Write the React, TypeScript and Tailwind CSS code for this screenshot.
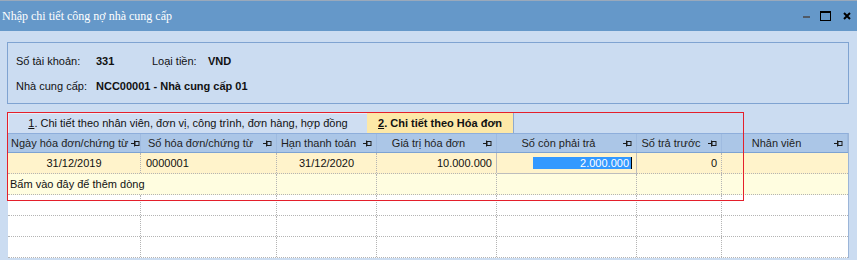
import React from 'react';

const cols = [133, 136, 100, 120, 140, 85, 126];

const headers = [
  { label: 'Ngày hóa đơn/chứng từ', align: 'justify-start pl-[3px]' },
  { label: 'Số hóa đơn/chứng từ', align: 'justify-center' },
  { label: 'Hạn thanh toán', align: 'justify-center' },
  { label: 'Giá trị hóa đơn', align: 'justify-center' },
  { label: 'Số còn phải trả', align: 'justify-center' },
  { label: 'Số trả trước', align: 'justify-center' },
  { label: 'Nhân viên', align: 'justify-center' },
];

function Pin() {
  return (
    <svg width="9" height="7" viewBox="0 0 9 7" className="shrink-0">
      <path d="M0 3.5H3.5M3.5 0.5V6.5" stroke="#1a1a1a" strokeWidth="1" fill="none" />
      <rect x="4" y="1.5" width="4" height="4" stroke="#1a1a1a" strokeWidth="1" fill="none" />
    </svg>
  );
}

function EmptyRow({ bg }: { bg: string }) {
  return (
    <div className={`flex h-[21px] border-b border-dotted border-[#b4b4b4] ${bg}`}>
      {cols.map((w, i) => (
        <div
          key={i}
          style={{ width: w }}
          className={`h-full shrink-0 ${i < cols.length - 1 ? 'border-r border-dotted border-[#b4b4b4]' : ''}`}
        />
      ))}
    </div>
  );
}

export default function App() {
  return (
    <div
      className="relative w-[857px] h-[260px] overflow-hidden bg-[#cbdcf1] text-[11px] text-[#111]"
      style={{ fontFamily: '"Liberation Sans", Arial, sans-serif' }}
    >
      {/* title bar */}
      <div className="flex items-center h-[31px] bg-[#6598c9] border-t border-[#9aa9bb] pl-[2px] pr-[6px]">
        <span
          className="text-white text-[12px] flex-1"
          style={{ fontFamily: '"Liberation Serif", "Times New Roman", serif' }}
        >
          Nhập chi tiết công nợ nhà cung cấp
        </span>
        <div className="flex items-center">
          <div className="w-[7px] h-[2px] bg-[#505a66] mr-[10px] mt-[2px]" />
          <div className="w-[11px] h-[10px] border border-black border-t-[2px] mr-[12px]" />
          <svg width="8" height="8" viewBox="0 0 8 8">
            <path d="M1 1L7 7M7 1L1 7" stroke="#000" strokeWidth="2" />
          </svg>
        </div>
      </div>

      {/* info box */}
      <div className="mt-[11px] ml-[7px] w-[842px] h-[62px] border border-[#7fa3d1] pl-[8px] pt-[11px]">
        <div className="flex items-center h-[14px]">
          <span className="w-[80px]">Số tài khoản:</span>
          <span className="w-[56px] font-bold">331</span>
          <span className="w-[56px]">Loại tiền:</span>
          <span className="font-bold">VND</span>
        </div>
        <div className="flex items-center h-[14px] mt-[11px]">
          <span className="w-[80px]">Nhà cung cấp:</span>
          <span className="font-bold">NCC00001 - Nhà cung cấp 01</span>
        </div>
      </div>

      {/* tabs */}
      <div className="mt-[9px] ml-[8px] flex h-[20px]">
        <div className="w-[359px] h-full flex items-center justify-center bg-[#cfdef2] border-t border-l border-[#e6eef8]">
          <span>
            <span className="underline">1</span>. Chi tiết theo nhân viên, đơn vị, công trình, đơn hàng, hợp đồng
          </span>
        </div>
        <div className="w-[147px] h-full flex items-center justify-center bg-[#fde8a7] border-r border-[#8ea9cf] font-bold">
          <span>
            <span className="underline">2</span>. Chi tiết theo Hóa đơn
          </span>
        </div>
      </div>

      {/* grid */}
      <div className="ml-[8px] w-[841px] border-r border-[#9bb5d8] bg-white">
        <div className="flex h-[20px] bg-[#abc6e7] border-t border-[#8eaedb] border-b border-b-[#7da2d2]">
          {headers.map((h, i) => (
            <div
              key={i}
              style={{ width: cols[i] }}
              className="h-full shrink-0 flex items-center gap-[3px] pr-[4px] border-r border-[#9fbbe0]"
            >
              <div className={`flex-1 flex ${h.align} text-[#1e1e1e] whitespace-nowrap`}>{h.label}</div>
              <Pin />
            </div>
          ))}
        </div>

        {/* row 1 */}
        <div className="flex h-[21px] bg-[#fff3cb] border-b border-dotted border-[#b4b4b4]">
          <div style={{ width: cols[0] }} className="shrink-0 flex items-center justify-center border-r border-dotted border-[#b4b4b4]">
            31/12/2019
          </div>
          <div style={{ width: cols[1] }} className="shrink-0 flex items-center pl-[5px] border-r border-dotted border-[#b4b4b4]">
            0000001
          </div>
          <div style={{ width: cols[2] }} className="shrink-0 flex items-center justify-center border-r border-dotted border-[#b4b4b4]">
            31/12/2020
          </div>
          <div style={{ width: cols[3] }} className="shrink-0 flex items-center justify-end pr-[4px] border-r border-[#bdbdbd]">
            10.000.000
          </div>
          <div style={{ width: cols[4] }} className="shrink-0 flex items-center justify-end pr-[4px] border-r border-b border-[#bdbdbd] h-[21px]">
            <div className="flex items-center h-[12px]">
              <div className="w-[98px] h-full bg-[#3399ff] flex items-center justify-end text-white pr-[2px] leading-none">
                2.000.000
              </div>
              <div className="w-[1px] h-full bg-black" />
            </div>
          </div>
          <div style={{ width: cols[5] }} className="shrink-0 flex items-center justify-end pr-[4px] border-r border-dotted border-[#b4b4b4]">
            0
          </div>
          <div style={{ width: cols[6] }} className="shrink-0" />
        </div>

        {/* row 2: add row */}
        <div className="relative">
          <EmptyRow bg="bg-[#fffde0]" />
          <span className="absolute left-[2px] top-0 h-[20px] flex items-center whitespace-nowrap bg-[#fffde0]">
            Bấm vào đây để thêm dòng
          </span>
        </div>

        <EmptyRow bg="bg-white" />
        <EmptyRow bg="bg-white" />
        <EmptyRow bg="bg-white" />
      </div>

      {/* red highlight frame */}
      <div className="absolute left-[7px] top-[112px] w-[737px] h-[89px] border border-[#e41f2b] pointer-events-none" />
    </div>
  );
}
